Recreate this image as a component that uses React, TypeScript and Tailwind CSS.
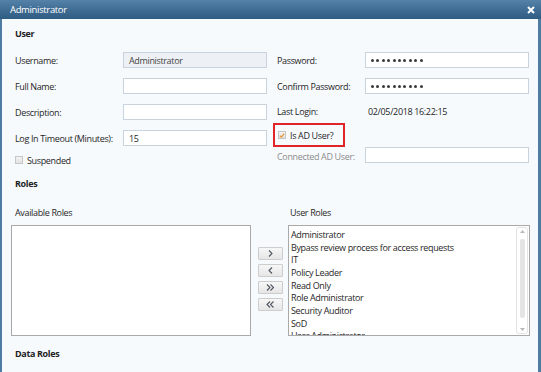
import React from "react";

function Dots() {
  return (
    <div className="flex gap-[2.4px]">
      {Array.from({ length: 10 }).map((_, i) => (
        <span key={i} className="w-[3px] h-[3px] rounded-full bg-[#3a3a3a]" />
      ))}
    </div>
  );
}

function Input({ value, w, bg = "bg-white", dots = false }: { value?: string; w: string; bg?: string; dots?: boolean }) {
  return (
    <div className={`${w} h-[16px] border border-[#c9d3dd] ${bg} flex items-center pl-[5px]`}>
      {dots ? <Dots /> : <span className={value === "Administrator" ? "text-[#444]" : ""}>{value}</span>}
    </div>
  );
}

function Row({ label, children, labelW, h = "h-[26px]", labelCls = "" }: { label: string; children?: React.ReactNode; labelW: string; h?: string; labelCls?: string }) {
  return (
    <div className={`${h} flex items-center`}>
      <div className={`${labelW} shrink-0 ${labelCls}`}>{label}</div>
      {children}
    </div>
  );
}

function Checkbox({ checked = false }: { checked?: boolean }) {
  return (
    <div className="w-[8px] h-[8px] border border-[#c6c6c6] bg-gradient-to-b from-[#f4f4f4] to-[#e2e2e2] flex items-center justify-center shrink-0">
      {checked && (
        <svg width="7" height="7" viewBox="0 0 7 7">
          <path d="M1 3.6 L2.8 5.4 L6 1.4" stroke="#e8902a" strokeWidth="1.3" fill="none" />
        </svg>
      )}
    </div>
  );
}

function MoveBtn({ children }: { children: React.ReactNode }) {
  return (
    <div className="w-[25px] h-[13px] border border-[#cdcdcd] rounded-[1px] bg-gradient-to-b from-[#f7f7f7] to-[#e6e6e6] flex items-center justify-center">
      {children}
    </div>
  );
}

function Chev({ dir, double = false }: { dir: "r" | "l"; double?: boolean }) {
  const one = (x: number) =>
    dir === "r" ? `M${x} 1.5 L${x + 3} 4.5 L${x} 7.5` : `M${x + 3} 1.5 L${x} 4.5 L${x + 3} 7.5`;
  return (
    <svg width="11" height="9" viewBox="0 0 11 9">
      {double ? (
        <>
          <path d={one(2)} stroke="#4f5560" strokeWidth="1.1" fill="none" />
          <path d={one(5.5)} stroke="#4f5560" strokeWidth="1.1" fill="none" />
        </>
      ) : (
        <path d={one(4)} stroke="#4f5560" strokeWidth="1.1" fill="none" />
      )}
    </svg>
  );
}

const roles = [
  "Administrator",
  "Bypass review process for access requests",
  "IT",
  "Policy Leader",
  "Read Only",
  "Role Administrator",
  "Security Auditor",
  "SoD",
  "User Administrator",
];

export default function App() {
  return (
    <div className="w-[541px] h-[372px] overflow-hidden flex flex-col bg-[#f7fafd] font-['Open_Sans','Noto_Sans',sans-serif] text-[9px] tracking-[-0.35px] text-[#1f1f1f] leading-none">
      <div className="h-[19px] shrink-0 flex items-center justify-between pl-[10px] pr-[6px] bg-gradient-to-b from-[#5482a8] via-[#3f6d94] to-[#2f5c83] text-white text-[9.5px]">
        <span>Administrator</span>
        <svg width="8" height="8" viewBox="0 0 8 8">
          <path d="M1 1 L7 7 M7 1 L1 7" stroke="white" strokeWidth="2" />
        </svg>
      </div>
      <div className="flex-1 flex flex-col border-l-2 border-r-[3px] border-[#4f7ca3] pl-[9px] pr-[8px]">
        <div className="pl-[4px] pt-[7px] h-[21px] flex items-center font-bold">User</div>
        <div className="pl-[4px] mt-[7px] flex">
          <div className="w-[252px] flex flex-col">
            <Row label="Username:" labelW="w-[108px]">
              <Input w="w-[144px]" value="Administrator" bg="bg-[#edf1f5]" />
            </Row>
            <Row label="Full Name:" labelW="w-[108px]">
              <Input w="w-[144px]" />
            </Row>
            <Row label="Description:" labelW="w-[108px]">
              <Input w="w-[144px]" />
            </Row>
            <Row label="Log In Timeout (Minutes):" labelW="w-[108px]">
              <Input w="w-[144px]" value="15" />
            </Row>
            <div className="h-[18px] flex items-center gap-[4px]">
              <Checkbox />
              <span>Suspended</span>
            </div>
          </div>
          <div className="ml-[10px] w-[253px] flex flex-col">
            <Row label="Password:" labelW="w-[88px]">
              <Input w="w-[164px]" dots />
            </Row>
            <Row label="Confirm Password:" labelW="w-[88px]">
              <Input w="w-[164px]" dots />
            </Row>
            <Row label="Last Login:" labelW="w-[91px]" h="h-[24px]">
              <span>02/05/2018 16:22:15</span>
            </Row>
            <div className="-ml-[4px] w-[72px] h-[24px] border-2 border-[#e0242a] flex items-center pl-[3px] gap-[4px]">
              <Checkbox checked />
              <span>Is AD User?</span>
            </div>
            <Row label="Connected AD User:" labelW="w-[88px]" h="h-[16px]" labelCls="text-[#8c8c8c] pt-[3px]">
              <Input w="w-[164px]" />
            </Row>
          </div>
        </div>
        <div className="pl-[4px] mt-[7px] h-[14px] flex items-center font-bold">Roles</div>
        <div className="mt-[15px] h-[14px] flex items-center">
          <span className="pl-[4px] w-[279px]">Available Roles</span>
          <span>User Roles</span>
        </div>
        <div className="mt-[6px] h-[111px] flex">
          <div className="w-[240px] h-full border border-[#a9a9a9] bg-white" />
          <div className="w-[37px] flex flex-col items-center pt-[22px] gap-[4px] pl-[1px]">
            <MoveBtn><Chev dir="r" /></MoveBtn>
            <MoveBtn><Chev dir="l" /></MoveBtn>
            <MoveBtn><Chev dir="r" double /></MoveBtn>
            <MoveBtn><Chev dir="l" double /></MoveBtn>
          </div>
          <div className="w-[242px] h-full border border-[#a9a9a9] bg-white flex overflow-hidden">
            <div className="flex-1 pl-[2px] pt-[2px] flex flex-col">
              {roles.map((r) => (
                <div key={r} className="h-[12.7px] flex items-center shrink-0">{r}</div>
              ))}
            </div>
            <div className="w-[12px] my-[1px] mr-[1px] border border-[#e3e3e3] rounded-[3px] flex flex-col items-center justify-between py-[2px]">
              <svg width="5" height="3" viewBox="0 0 5 3"><path d="M0 3 L2.5 0 L5 3 Z" fill="#b8b8b8" /></svg>
              <div className="w-[5px] h-[79px] rounded-[2px] bg-[#e4e4e4] -mt-[4px]" />
              <svg width="5" height="3" viewBox="0 0 5 3"><path d="M0 0 L2.5 3 L5 0 Z" fill="#b8b8b8" /></svg>
            </div>
          </div>
        </div>
        <div className="pl-[4px] mt-[10px] h-[14px] flex items-center font-bold">Data Roles</div>
      </div>
    </div>
  );
}
